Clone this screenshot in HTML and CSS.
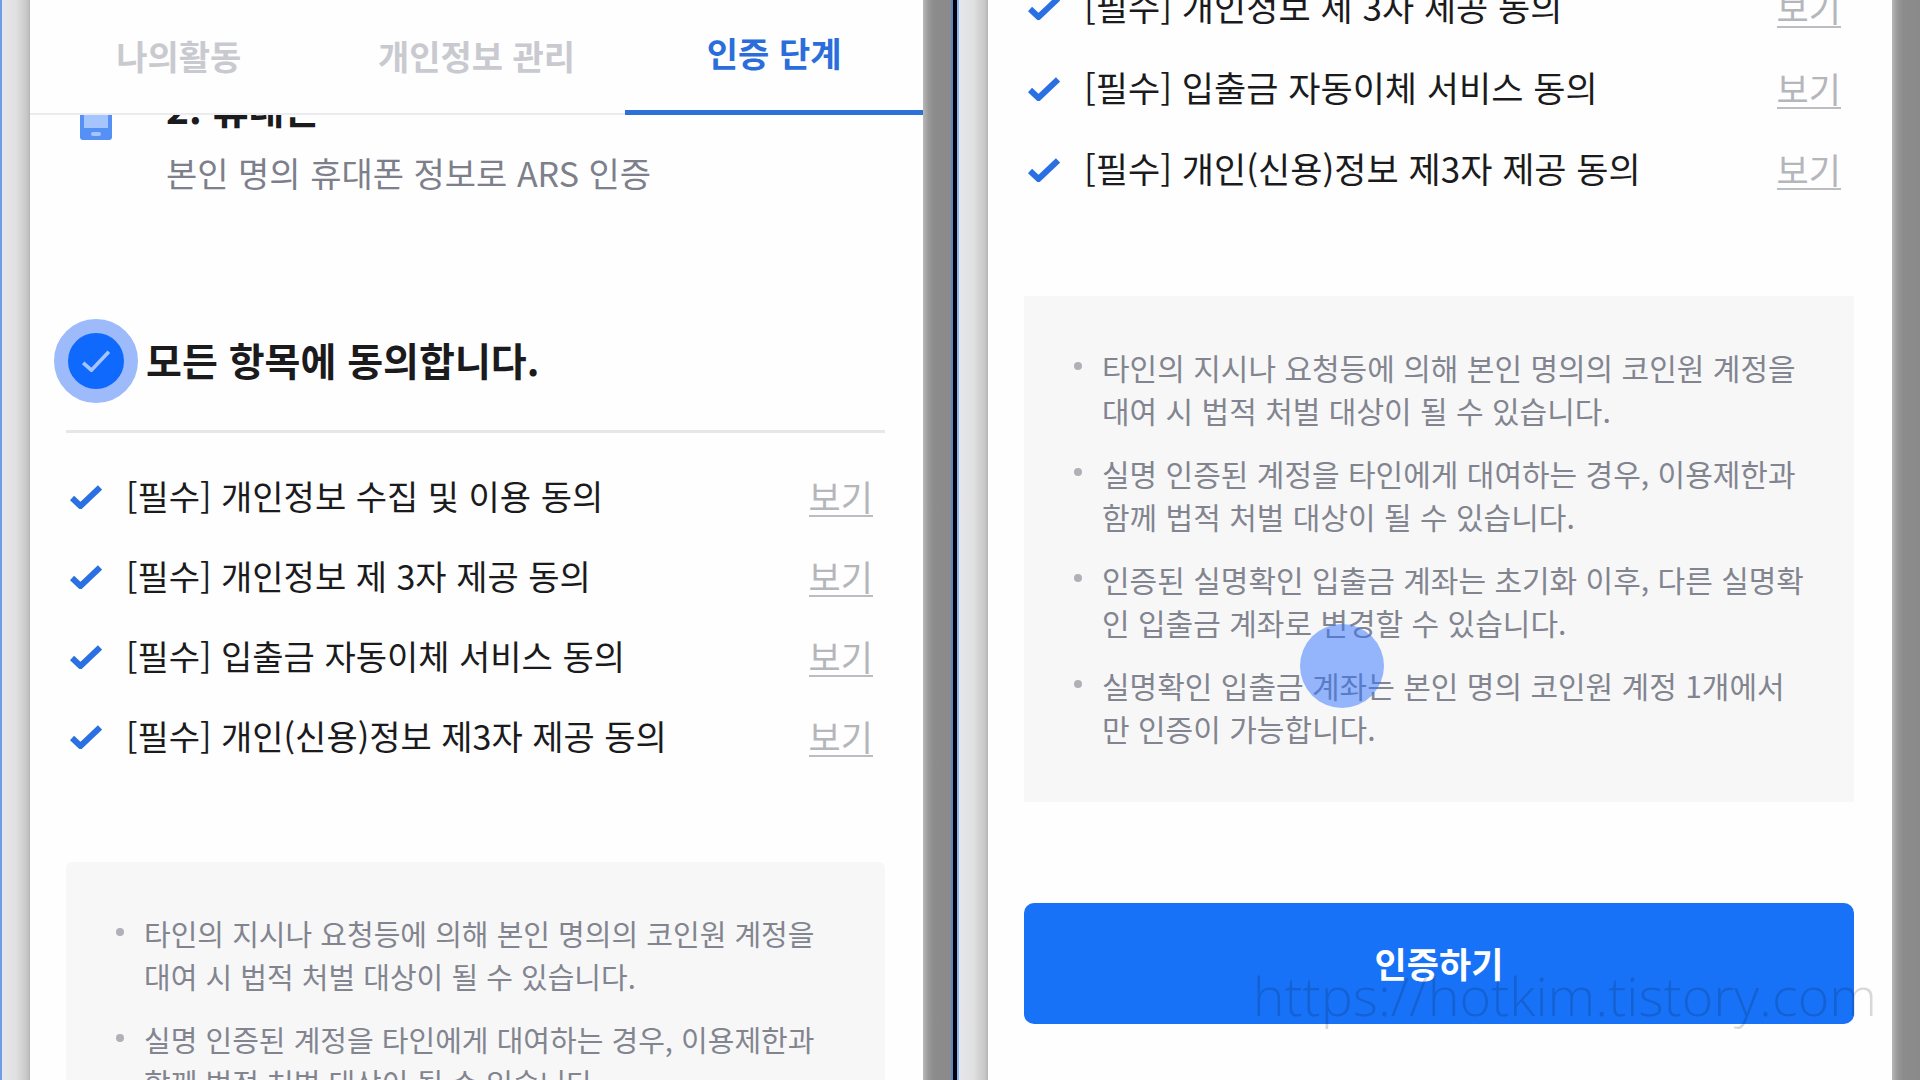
FILE: index.html
```html
<!DOCTYPE html>
<html lang="ko">
<head>
<meta charset="utf-8">
<title>인증 단계</title>
<link rel="stylesheet" href="styles.css">
</head>
<body>
<svg class="defs" aria-hidden="true">
  <symbol id="check" viewBox="0 0 32 24"><path d="M2 13L10.500 21L30 2.500" fill="none" stroke="currentColor" stroke-width="6"/></symbol>
</svg>
<main class="compare">
  <section class="pane pane-left">
    <div class="screen">
      <nav class="tabs">
        <a class="tab" href="#activity">나의활동</a>
        <a class="tab" href="#profile">개인정보 관리</a>
        <a class="tab tab-active" href="#verify">인증 단계</a>
      </nav>
      <div class="scroll">
        <div class="step">
          <svg class="phone" viewBox="0 0 32 56" aria-hidden="true">
            <rect width="32" height="56" rx="3" fill="#5590f6"/>
            <rect x="4" y="5" width="24" height="39" fill="#a6c4fd"/>
            <rect x="11" y="48" width="10" height="4" rx="2" fill="#a6c4fd"/>
          </svg>
          <div class="step-text">
            <h2 class="step-title">2. 휴대폰</h2>
            <p class="step-sub">본인 명의 휴대폰 정보로 ARS 인증</p>
          </div>
        </div>
        <label class="all">
          <span class="all-mark">
            <input class="tick" type="checkbox" checked>
            <svg class="all-check" viewBox="0 0 32 24" aria-hidden="true"><path d="M2 14L11 22L30 2" fill="none" stroke="currentColor" stroke-width="4"/></svg>
          </span>
          <span class="all-text">모든 항목에 동의합니다.</span>
        </label>
        <ul class="terms">
          <li class="term"><label class="term-label"><span class="mark"><input class="tick" type="checkbox" checked><svg class="check" aria-hidden="true"><use href="#check"/></svg></span><span class="term-text">[필수] 개인정보 수집 및 이용 동의</span></label><a class="view" href="#t1">보기</a></li>
          <li class="term"><label class="term-label"><span class="mark"><input class="tick" type="checkbox" checked><svg class="check" aria-hidden="true"><use href="#check"/></svg></span><span class="term-text">[필수] 개인정보 제 3자 제공 동의</span></label><a class="view" href="#t2">보기</a></li>
          <li class="term"><label class="term-label"><span class="mark"><input class="tick" type="checkbox" checked><svg class="check" aria-hidden="true"><use href="#check"/></svg></span><span class="term-text">[필수] 입출금 자동이체 서비스 동의</span></label><a class="view" href="#t3">보기</a></li>
          <li class="term"><label class="term-label"><span class="mark"><input class="tick" type="checkbox" checked><svg class="check" aria-hidden="true"><use href="#check"/></svg></span><span class="term-text">[필수] 개인(신용)정보 제3자 제공 동의</span></label><a class="view" href="#t4">보기</a></li>
        </ul>
        <ul class="notice">
          <li class="note">타인의 지시나 요청등에 의해 본인 명의의 코인원 계정을<br>대여 시 법적 처벌 대상이 될 수 있습니다.</li>
          <li class="note">실명 인증된 계정을 타인에게 대여하는 경우, 이용제한과<br>함께 법적 처벌 대상이 될 수 있습니다.</li>
        </ul>
      </div>
    </div>
  </section>
  <section class="pane pane-right">
    <div class="screen">
      <div class="scroll">
        <ul class="terms">
          <li class="term"><label class="term-label"><span class="mark"><input class="tick" type="checkbox" checked><svg class="check" aria-hidden="true"><use href="#check"/></svg></span><span class="term-text">[필수] 개인정보 제 3자 제공 동의</span></label><a class="view" href="#t2">보기</a></li>
          <li class="term"><label class="term-label"><span class="mark"><input class="tick" type="checkbox" checked><svg class="check" aria-hidden="true"><use href="#check"/></svg></span><span class="term-text">[필수] 입출금 자동이체 서비스 동의</span></label><a class="view" href="#t3">보기</a></li>
          <li class="term"><label class="term-label"><span class="mark"><input class="tick" type="checkbox" checked><svg class="check" aria-hidden="true"><use href="#check"/></svg></span><span class="term-text">[필수] 개인(신용)정보 제3자 제공 동의</span></label><a class="view" href="#t4">보기</a></li>
        </ul>
        <ul class="notice">
          <li class="note">타인의 지시나 요청등에 의해 본인 명의의 코인원 계정을<br>대여 시 법적 처벌 대상이 될 수 있습니다.</li>
          <li class="note">실명 인증된 계정을 타인에게 대여하는 경우, 이용제한과<br>함께 법적 처벌 대상이 될 수 있습니다.</li>
          <li class="note">인증된 실명확인 입출금 계좌는 초기화 이후, 다른 실명확<br>인 입출금 계좌로 변경할 수 있습니다.</li>
          <li class="note">실명확인 입출금 계좌는 본인 명의 코인원 계정 1개에서<br>만 인증이 가능합니다.<span class="touch"></span></li>
        </ul>
        <button class="submit" type="button">인증하기</button>
      </div>
    </div>
  </section>
</main>
<div class="watermark">https://hotkim.tistory.com</div>
</body>
</html>
```
FILE: styles.css
```css
* { box-sizing: border-box; }
body {
  margin: 0;
  height: 100vh;
  overflow: hidden;
  position: relative;
  background: #02030a;
  color: #1b1b1d;
  font-family: "Noto Sans CJK KR", sans-serif;
  font-size: 35px;
}
h2, p, ul { margin: 0; padding: 0; }
ul { list-style: none; }
a { color: inherit; text-decoration: none; }
.defs { position: absolute; width: 0; height: 0; }

.compare {
  display: grid;
  grid-template-columns: 953fr 963fr;
  column-gap: 4px;
  height: 100%;
}
.pane {
  min-width: 0;
  overflow: hidden;
  padding: 0 28px;
  border-left: 2px solid #6f9de6;
  background:
    linear-gradient(90deg, #e6e7ec, #e0e0e1 50%, #c6c6c6 90%, #b4b4b4) left / 28px 100% no-repeat,
    linear-gradient(90deg, #b8b8b8, #989898 20%, #8c8c8c 40%, #8a8a8a) right / 28px 100% no-repeat;
}
.pane-left { border-right: 2px solid #6482bd; }
.pane-right { border-left-color: #8eb4f2; padding-left: 29px; background-size: 29px 100%, 28px 100%; }
.screen {
  display: flex;
  flex-direction: column;
  height: 100%;
  background: #fefefe;
}
.scroll {
  flex: 1;
  min-height: 0;
  overflow: hidden;
  padding: 0 38px 0 36px;
}

.tabs { display: grid; grid-template-columns: repeat(3, 1fr); height: 115px; font-size: 34px; }
.tab {
  display: flex;
  align-items: center;
  justify-content: center;
  padding-bottom: 3px;
  border-bottom: 2px solid #ececee;
  color: #c9cad0;
  font-weight: 700;
}
.tab-active { padding-bottom: 5px; border-bottom: 5px solid #2d70d8; color: #2b6edb; }

.step { display: flex; gap: 54px; margin-top: -38px; padding-left: 14px; }
.phone { width: 32px; height: 56px; margin-top: 7px; }
.step-title { font-size: 39px; line-height: 60px; font-weight: 700; }
.step-sub { margin-top: 11px; font-size: 34px; line-height: 50px; color: #7d808b; }

.all {
  display: flex;
  align-items: center;
  gap: 8px;
  height: 84px;
  margin: 121px 0 27px -12px;
  font-size: 39px;
  font-weight: 700;
}
.all-mark, .mark { display: grid; place-items: center; }
.all-mark > *, .mark > * { grid-area: 1 / 1; }
.tick { appearance: none; width: 100%; height: 100%; margin: 0; }
.all-mark {
  width: 84px;
  height: 84px;
  border: 14px solid #9dbafb;
  border-radius: 50%;
  background: #0f69fd;
}
.all-check { width: 30px; height: 22px; color: #a5c3fc; }

.pane-left .terms { border-top: 3px solid #e6e7ea; padding-top: 24px; }
.pane-left .term-text { font-size: 34px; }
.term { display: flex; align-items: center; justify-content: space-between; height: 80px; padding: 0 12px 0 4px; }
.term-label { display: flex; align-items: center; gap: 24px; }
.term-text, .all-text { padding-bottom: 4px; }
.mark { width: 32px; height: 24px; }
.check { width: 32px; height: 24px; color: #2a70e2; }
.view { line-height: 38px; border-bottom: 2px solid #bcbdc2; color: #b5b6bb; }

.notice {
  display: grid;
  gap: 20px;
  margin-top: 85px;
  padding: 50px 0 52px 78px;
  border-radius: 6px;
  background: #f7f7f8;
  color: #82858f;
  font-size: 30px;
  line-height: 43px;
  white-space: nowrap;
}
.pane-left .notice { font-size: 29px; }
.note { position: relative; }
.note::before {
  content: "";
  position: absolute;
  left: -28px;
  top: 16px;
  width: 8px;
  height: 8px;
  border-radius: 50%;
  background: #b0b1b6;
}

.pane-right .terms { margin-top: -33px; }
.pane-right .term { height: 81px; padding-right: 13px; }
.pane-right .notice { margin-top: 86px; border-radius: 0; }
.touch {
  position: absolute;
  left: 198px;
  top: -40px;
  width: 84px;
  height: 84px;
  border-radius: 50%;
  background: rgba(50, 115, 255, 0.5);
}
.submit {
  display: block;
  width: 100%;
  height: 121px;
  margin-top: 101px;
  padding: 0 0 2px;
  border: 0;
  border-radius: 10px;
  background: #1872f8;
  color: #fff;
  font: inherit;
  font-weight: 700;
}
.watermark {
  position: absolute;
  right: 43px;
  bottom: 48px;
  color: rgba(0, 0, 0, 0.15);
  font-family: "Open Sans", sans-serif;
  font-size: 54px;
  font-weight: 300;
  line-height: 74px;
  pointer-events: none;
}
```
